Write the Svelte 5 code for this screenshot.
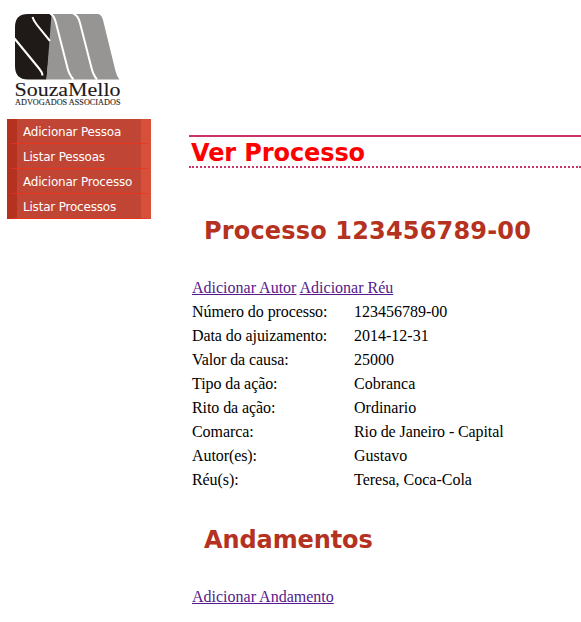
<script>
  const menu = ['Adicionar Pessoa', 'Listar Pessoas', 'Adicionar Processo', 'Listar Processos'];
  const fields = [
    ['Número do processo:', '123456789-00'],
    ['Data do ajuizamento:', '2014-12-31'],
    ['Valor da causa:', '25000'],
    ['Tipo da ação:', 'Cobranca'],
    ['Rito da ação:', 'Ordinario'],
    ['Comarca:', 'Rio de Janeiro - Capital'],
    ['Autor(es):', 'Gustavo'],
    ['Réu(s):', 'Teresa, Coca-Cola']
  ];
</script>

<div class="page">
  <aside>
    <svg class="logo" width="120" height="111" viewBox="7 8 120 111" role="img" aria-label="SouzaMello Advogados Associados">
      <path d="M28 14H53L46.500 79.500H28Q15 79.500 15 66V27Q15 14 28 14Z" fill="#1f1a17" />
      <path d="M51.500 14H98Q101.500 14.500 103 20L115 69Q116.500 76 119.500 79.500H46.500Z" fill="#969593" />
      <g fill="none" stroke="#fff" stroke-width="2">
        <path d="M14.500 38.500L39.500 69Q42 72 42.600 75.500" />
        <path d="M32.500 17Q33.500 20.500 37 25L50 41" />
        <path d="M50 13.500Q54 15 56 23L67 66Q69 75 73.500 79.500" />
        <path d="M73 13.500Q78 15 80 23L91 66Q93 75 97 79.500" />
      </g>
      <text x="14.500" y="96" font-size="19.500" stroke-width="0.100" textLength="106" lengthAdjust="spacingAndGlyphs">SouzaMello</text>
      <text x="15" y="105" font-size="7.600" stroke-width="0.100" textLength="105.500" lengthAdjust="spacingAndGlyphs">ADVOGADOS ASSOCIADOS</text>
    </svg>
    <nav>
      {#each menu as item}
        <a href="#top">{item}</a>
      {/each}
    </nav>
  </aside>
  <main>
    <h1>Ver Processo</h1>
    <section>
      <h2 class="number">Processo 123456789-00</h2>
      <p><a href="#top">Adicionar Autor</a> <a href="#top">Adicionar Réu</a></p>
      <dl>
        {#each fields as [label, value]}
          <dt>{label}</dt>
          <dd>{value}</dd>
        {/each}
      </dl>
      <h2 class="second">Andamentos</h2>
      <p><a href="#top">Adicionar Andamento</a></p>
    </section>
  </main>
</div>

<style>
  :global(body) { background: #fff; }
  .page {
    display: flex;
    gap: 38px;
    height: 622px;
    box-sizing: border-box;
    padding: 8px 0 0 7px;
    overflow: hidden;
    font: 16px/24px "Liberation Serif", "Times New Roman", serif;
    color: #000;
  }
  aside { width: 144px; flex: none; }
  .logo { display: block; }
  .logo text {
    font-family: "Liberation Serif", serif;
    fill: #1f1a17;
    stroke: #1f1a17;
  }
  nav a {
    display: block;
    height: 23px;
    padding: 1px 0 0 6px;
    border-left: 10px solid #b53120;
    border-right: 10px solid #d8503a;
    border-bottom: 1px solid #e8341c;
    background: #c04534;
    color: #fff;
    font: 12px/24px "DejaVu Sans", sans-serif;
    letter-spacing: -0.2px;
    text-decoration: none;
    white-space: nowrap;
  }
  main { flex: 1; min-width: 0; padding-top: 127px; }
  h1, h2 {
    margin: 0;
    font: bold 24px/30px "DejaVu Sans", sans-serif;
    letter-spacing: -0.1px;
    white-space: nowrap;
  }
  h1 {
    height: 29px;
    padding-left: 2px;
    border-top: 2px solid #cc3366;
    border-bottom: 2px dotted #cc3366;
    line-height: 32px;
    color: #f00;
  }
  section { padding: 48px 0 0 3px; }
  h2 { padding-left: 12px; color: #b53120; }
  .number { letter-spacing: 0.17px; }
  p { margin: 30px 0 0; }
  p a { color: #551a8b; }
  dl {
    display: grid;
    grid-template-columns: 162px 1fr;
    grid-auto-rows: 24px;
    margin: 0;
  }
  dt { letter-spacing: -0.08px; }
  dd { margin: 0; }
  dd:nth-of-type(6) { letter-spacing: -0.1px; }
  .second { margin-top: 33px; }
</style>
